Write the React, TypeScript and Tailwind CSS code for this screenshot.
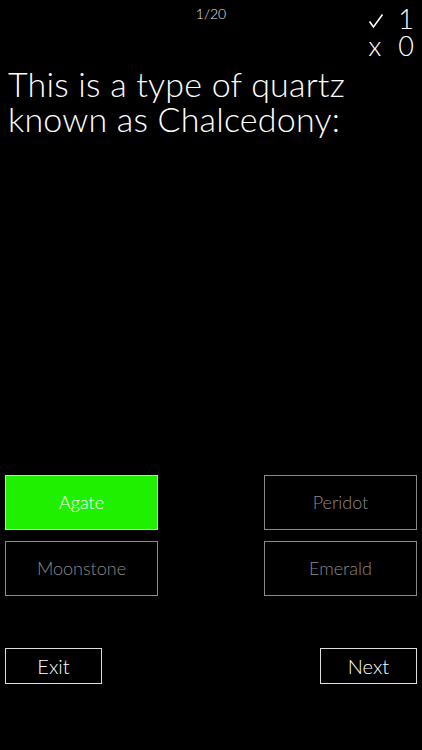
import React from "react";

const font = { fontFamily: '"Lato", "Noto Sans", sans-serif' };

export default function App() {
  const answers = [
    { t: "Agate", on: true },
    { t: "Peridot", on: false },
    { t: "Moonstone", on: false },
    { t: "Emerald", on: false },
  ];
  return (
    <div className="w-[422px] h-[750px] bg-black text-white font-light flex flex-col" style={font}>
      <div className="relative h-[66px]">
        <div className="pt-[5px] text-center text-[14px] leading-[18px] text-[#e5e5e5]">1/20</div>
        <div className="absolute right-[8px] top-[5px] flex flex-col text-[27px] leading-[27px]">
          <div className="flex items-center justify-between gap-[14px]">
            <svg width="16" height="16" viewBox="0 0 16 16" className="mt-[4px]">
              <polyline points="1.5,8.5 5.5,14 14.5,1.5" fill="none" stroke="white" strokeWidth="1.6" />
            </svg>
            <span>1</span>
          </div>
          <div className="flex items-center justify-between gap-[14px]">
            <span className="text-[28px]">x</span>
            <span>0</span>
          </div>
        </div>
      </div>
      <div className="px-[8px] text-[34px] leading-[35px] tracking-[0.2px]">
        This is a type of quartz<br />known as Chalcedony:
      </div>
      <div className="flex-1" />
      <div className="grid grid-cols-2 gap-x-[106px] gap-y-[11px] px-[5px]">
        {answers.map((a) => (
          <div
            key={a.t}
            className={
              a.on
                ? "h-[55px] border border-[#cfcfcf] bg-[#1ef000] text-white flex items-center justify-center text-[18px]"
                : "h-[55px] border border-[#8a8a8a] text-[#8a8a8a] flex items-center justify-center text-[18px]"
            }
          >
            {a.t}
          </div>
        ))}
      </div>
      <div className="h-[52px]" />
      <div className="flex justify-between px-[5px]">
        <div className="w-[97px] h-[36px] border border-[#dddddd] flex items-center justify-center text-[20px]">Exit</div>
        <div className="w-[97px] h-[36px] border border-[#dddddd] flex items-center justify-center text-[20px]">Next</div>
      </div>
      <div className="h-[66px]" />
    </div>
  );
}
